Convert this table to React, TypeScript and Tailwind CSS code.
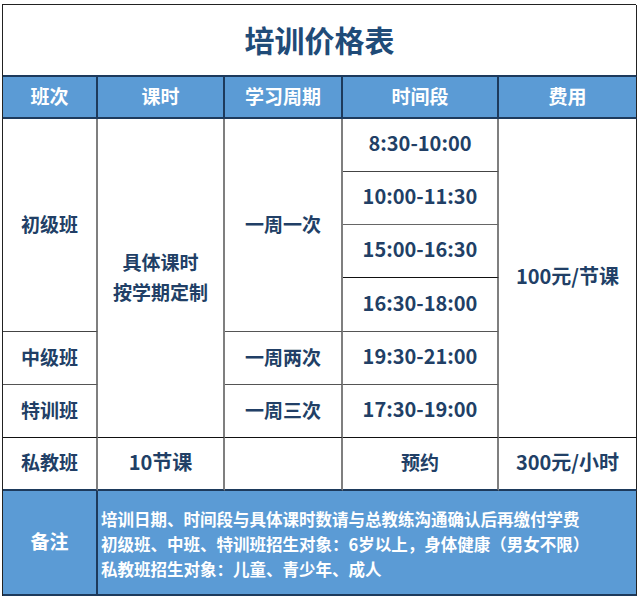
import React from "react";

const font = { fontFamily: '"Noto Sans CJK SC", "Noto Sans", sans-serif' };

function Cell({ className = "", children }: { className?: string; children?: React.ReactNode }) {
  return (
    <div className={`flex items-center justify-center text-center font-bold pb-[2px] ${className}`}>
      {children}
    </div>
  );
}

const body = "text-[19px] text-[#213f66] bg-white";
const num = "text-[20px] text-[#213f66] bg-white pb-[4px]";
const head = "text-[19px] text-white bg-[#5b9bd5] border-b-2 border-b-[#1d3a5c] border-r-2 border-r-[#1d3a5c]";

export default function App() {
  return (
    <div className="w-[640px] h-[599px] bg-white pl-[2px] pt-[4px]" style={font}>
      <div className="grid w-[634px] grid-cols-[95px_127px_118px_156px_138px] grid-rows-[72px_42px_53px_53px_53px_54px_53px_53px_53px_105px] border-l-[1.5px] border-t-[1.5px] border-[#222]">
        {/* title */}
        <Cell className="col-span-5 text-[30px] text-[#1f4b78] border-r-[1.5px] border-r-[#222] border-b-2 border-b-[#1d3a5c]">
          培训价格表
        </Cell>

        {/* header */}
        <Cell className={head}>班次</Cell>
        <Cell className={head}>课时</Cell>
        <Cell className={head}>学习周期</Cell>
        <Cell className={head}>时间段</Cell>
        <Cell className={`${head} border-r-[1.5px] border-r-[#222]`}>费用</Cell>

        {/* col 1 */}
        <Cell className={`${body} col-start-1 row-start-3 row-span-4 border-r-2 border-r-[#7f7f7f] border-b border-b-[#444]`}>初级班</Cell>
        <Cell className={`${body} col-start-1 row-start-7 border-r-2 border-r-[#7f7f7f] border-b border-b-[#555]`}>中级班</Cell>
        <Cell className={`${body} col-start-1 row-start-8 border-r-2 border-r-[#7f7f7f] border-b-[1.5px] border-b-[#111]`}>特训班</Cell>
        <Cell className={`${body} col-start-1 row-start-9 border-r-2 border-r-[#7f7f7f] border-b-2 border-b-[#1d3a5c]`}>私教班</Cell>

        {/* col 2 */}
        <Cell className={`${body} col-start-2 row-start-3 row-span-6 flex-col leading-[30px] border-r-2 border-r-[#7f7f7f] border-b-[1.5px] border-b-[#111]`}>
          <span>具体课时</span>
          <span>按学期定制</span>
        </Cell>
        <Cell className={`${num} col-start-2 row-start-9 border-r-2 border-r-[#7f7f7f] border-b-2 border-b-[#1d3a5c]`}>10节课</Cell>

        {/* col 3 */}
        <Cell className={`${body} col-start-3 row-start-3 row-span-4 border-r-2 border-r-[#7f7f7f] border-b border-b-[#555]`}>一周一次</Cell>
        <Cell className={`${body} col-start-3 row-start-7 border-r-2 border-r-[#7f7f7f] border-b border-b-[#555]`}>一周两次</Cell>
        <Cell className={`${body} col-start-3 row-start-8 border-r-2 border-r-[#7f7f7f] border-b-[1.5px] border-b-[#111]`}>一周三次</Cell>
        <Cell className={`${body} col-start-3 row-start-9 border-r-2 border-r-[#7f7f7f] border-b-2 border-b-[#1d3a5c]`}></Cell>

        {/* col 4 */}
        <Cell className={`${num} col-start-4 row-start-3 border-r-2 border-r-[#7f7f7f] border-b border-b-[#444]`}>8:30-10:00</Cell>
        <Cell className={`${num} col-start-4 row-start-4 border-r-2 border-r-[#7f7f7f] border-b border-b-[#666]`}>10:00-11:30</Cell>
        <Cell className={`${num} col-start-4 row-start-5 border-r-2 border-r-[#7f7f7f] border-b-[1.5px] border-b-[#111]`}>15:00-16:30</Cell>
        <Cell className={`${num} col-start-4 row-start-6 border-r-2 border-r-[#7f7f7f] border-b border-b-[#555]`}>16:30-18:00</Cell>
        <Cell className={`${num} col-start-4 row-start-7 border-r-2 border-r-[#7f7f7f] border-b border-b-[#555]`}>19:30-21:00</Cell>
        <Cell className={`${num} col-start-4 row-start-8 border-r-2 border-r-[#7f7f7f] border-b-[1.5px] border-b-[#111]`}>17:30-19:00</Cell>
        <Cell className={`${body} col-start-4 row-start-9 border-r-2 border-r-[#7f7f7f] border-b-2 border-b-[#1d3a5c]`}>预约</Cell>

        {/* col 5 */}
        <Cell className={`${num} col-start-5 row-start-3 row-span-6 border-r-[1.5px] border-r-[#222] border-b-[1.5px] border-b-[#111]`}>100元/节课</Cell>
        <Cell className={`${num} col-start-5 row-start-9 border-r-[1.5px] border-r-[#222] border-b-2 border-b-[#1d3a5c]`}>300元/小时</Cell>

        {/* remarks */}
        <Cell className="col-start-1 row-start-10 bg-[#5b9bd5] text-white text-[19px] border-r-2 border-r-[#1d3a5c] border-b-2 border-b-[#1d3a5c]">备注</Cell>
        <div className="col-start-2 col-span-4 row-start-10 flex flex-col justify-center bg-[#5b9bd5] text-white text-[16.5px] font-bold leading-[25px] pl-[3px] pt-[3px] border-r-[1.5px] border-r-[#222] border-b-2 border-b-[#1d3a5c]">
          <span>培训日期、时间段与具体课时数请与总教练沟通确认后再缴付学费</span>
          <span>初级班、中班、特训班招生对象：6岁以上，身体健康（男女不限）</span>
          <span>私教班招生对象：儿童、青少年、成人</span>
        </div>
      </div>
    </div>
  );
}
